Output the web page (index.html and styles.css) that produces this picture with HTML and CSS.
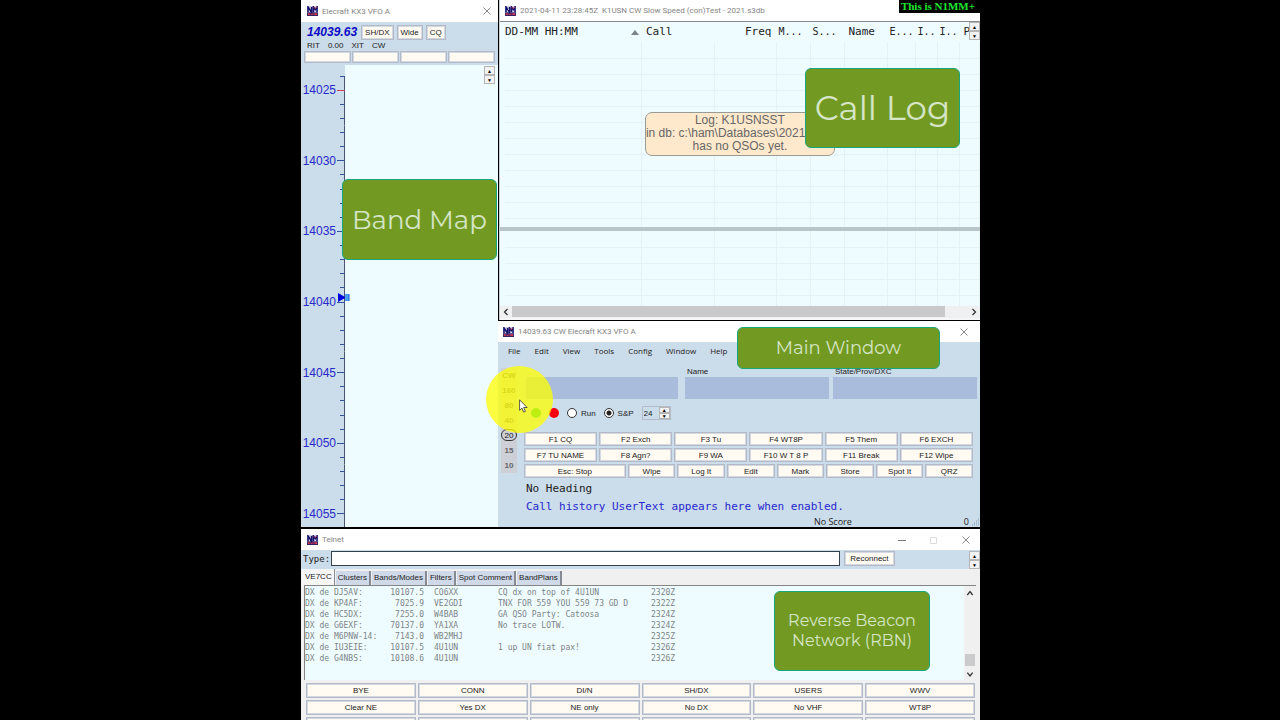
FILE: index.html
```html
<!DOCTYPE html>
<html lang="en">
<head>
<meta charset="utf-8">
<title>N1MM+ windows</title>
<link rel="stylesheet" href="styles.css">
</head>
<body>
<svg class="defs" aria-hidden="true">
  <symbol id="logo" viewBox="0 0 12 11">
    <rect width="12" height="11" fill="#d3cfe8"/>
    <rect y="7" width="12" height="4" fill="#33205f"/>
    <path d="M1 9h2M4 9h3M8 9h3" stroke="#d33a55" stroke-width="2"/>
    <path d="M1 7V1l4 6V1M7 7V1l2 3 2-3v6" fill="none" stroke="#11116b" stroke-width="1.7"/>
    <path d="M7 1l2 2 2-2" fill="none" stroke="#c03048" stroke-width="1"/>
  </symbol>
  <symbol id="close" viewBox="0 0 8 8"><path d="M.5 .5l7 7M7.500 .5l-7 7" stroke="#8a8a8a" fill="none"/></symbol>
</svg>
<main class="desktop">
  <div class="upper">
    <section class="window bandmap">
      <header class="title"><svg class="logo"><use href="#logo"/></svg><span>Elecraft KX3 VFO A</span><button class="close" aria-label="Close"><svg><use href="#close"/></svg></button></header>
      <div class="vfo"><strong>14039.63</strong><button>SH/DX</button><button>Wide</button><button>CQ</button></div>
      <div class="rit"><span>RIT</span><span>0.00</span><span>XIT</span><span>CW</span></div>
      <div class="slots"><button aria-label="Slot 1"></button><button aria-label="Slot 2"></button><button aria-label="Slot 3"></button><button aria-label="Slot 4"></button></div>
      <div class="map">
        <ul class="scale">
          <li></li><li class="major spot">14025</li><li></li><li></li><li></li><li></li>
          <li class="major">14030</li><li></li><li></li><li></li><li></li>
          <li class="major">14035</li><li></li><li></li><li></li><li></li>
          <li class="major">14040</li><li></li><li></li><li></li><li></li>
          <li class="major">14045</li><li></li><li></li><li></li><li></li>
          <li class="major">14050</li><li></li><li></li><li></li><li></li>
          <li class="major">14055</li><li class="tail"></li>
        </ul>
        <div class="spots"><div class="spin"><button aria-label="Up">▲</button><button aria-label="Down">▼</button></div></div>
        <svg class="marker" viewBox="0 0 12 9"><path d="M0 0l8 4.500-8 4.500z" fill="#00d"/><path d="M7 1h4v7H7z" fill="#4aa0f0"/><path d="M11 1v7" stroke="#125ad0"/></svg>
      </div>
      <div class="label label-map">Band Map</div>
    </section>

    <div class="right">
      <section class="window log">
        <header class="title"><svg class="logo"><use href="#logo"/></svg><span>2021-04-11 23:28:45Z&nbsp; K1USN CW Slow Speed (con)Test - 2021.s3db</span></header>
        <div class="banner">This is N1MM+</div>
        <div class="pane pane-top">
          <table>
            <colgroup><col class="c-time"><col><col class="c-freq"><col class="c-m"><col class="c-s"><col class="c-name"><col class="c-e"><col class="c-i"><col class="c-j"><col class="c-p"></colgroup>
            <thead><tr><th>DD-MM HH:MM<i class="sort"></i></th><th>Call</th><th class="num">Freq</th><th class="slim">M...</th><th class="slim">S...</th><th>Name</th><th class="slim">E...</th><th class="slim">I..</th><th class="slim">I..</th><th>P</th></tr></thead>
            <tbody>
              <tr><td><td><td><td><td><td><td><td><td><td></tr>
              <tr><td><td><td><td><td><td><td><td><td><td></tr>
              <tr><td><td><td><td><td><td><td><td><td><td></tr>
              <tr><td><td><td><td><td><td><td><td><td><td></tr>
              <tr><td><td><td><td><td><td><td><td><td><td></tr>
              <tr><td><td><td><td><td><td><td><td><td><td></tr>
              <tr><td><td><td><td><td><td><td><td><td><td></tr>
              <tr><td><td><td><td><td><td><td><td><td><td></tr>
              <tr><td><td><td><td><td><td><td><td><td><td></tr>
              <tr><td><td><td><td><td><td><td><td><td><td></tr>
              <tr><td><td><td><td><td><td><td><td><td><td></tr>
              <tr><td><td><td><td><td><td><td><td><td><td></tr>
            </tbody>
          </table>
          <div class="spin"><button aria-label="Up">▲</button><button aria-label="Down">▼</button></div>
          <div class="notice">Log: K1USNSST<br>in db: c:\ham\Databases\2021.s3db<br>has no QSOs yet.</div>
        </div>
        <div class="pane pane-low">
          <table>
            <colgroup><col class="c-time"><col><col class="c-freq"><col class="c-m"><col class="c-s"><col class="c-name"><col class="c-e"><col class="c-i"><col class="c-j"><col class="c-p"></colgroup>
            <tbody>
              <tr><td><td><td><td><td><td><td><td><td><td></tr>
              <tr><td><td><td><td><td><td><td><td><td><td></tr>
              <tr><td><td><td><td><td><td><td><td><td><td></tr>
              <tr><td><td><td><td><td><td><td><td><td><td></tr>
              <tr><td><td><td><td><td><td><td><td><td><td></tr>
            </tbody>
          </table>
        </div>
        <div class="hbar"><button aria-label="Scroll left"><svg viewBox="0 0 6 8"><path d="M4.500 1l-3 3 3 3"/></svg></button><div class="track"><div class="thumb"></div></div><button aria-label="Scroll right"><svg viewBox="0 0 6 8"><path d="M1.500 1l3 3-3 3"/></svg></button></div>
        <div class="label label-log">Call Log</div>
      </section>

      <section class="window entry">
        <header class="title"><svg class="logo"><use href="#logo"/></svg><span>14039.63 CW Elecraft KX3 VFO A</span><button class="close" aria-label="Close"><svg><use href="#close"/></svg></button></header>
        <nav class="menu"><button>File</button><button>Edit</button><button>View</button><button>Tools</button><button>Config</button><button>Window</button><button>Help</button></nav>
        <div class="body">
          <div class="bands"><button>CW</button><button>160</button><button>80</button><button>40</button><button class="on">20</button><button>15</button><button>10</button></div>
          <div class="form">
            <div class="fields">
              <label class="f-call"><span>&nbsp;</span><input type="text" aria-label="Call"></label>
              <label><span>Name</span><input type="text"></label>
              <label><span>State/Prov/DXC</span><input type="text"></label>
            </div>
            <div class="mode">
              <i class="led green"></i><i class="led red"></i>
              <label><input type="radio" name="mode">Run</label>
              <label><input type="radio" name="mode" checked>S&amp;P</label>
              <div class="speed"><input type="text" value="24" aria-label="Speed"><div class="spin"><button aria-label="Faster">▲</button><button aria-label="Slower">▼</button></div></div>
            </div>
            <div class="keys">
              <button>F1 CQ</button><button>F2 Exch</button><button>F3 Tu</button><button>F4 WT8P</button><button>F5 Them</button><button>F6 EXCH</button>
              <button>F7 TU NAME</button><button>F8 Agn?</button><button>F9 WA</button><button>F10 W T 8 P</button><button>F11 Break</button><button>F12 Wipe</button>
            </div>
            <div class="actions"><button>Esc: Stop</button><button>Wipe</button><button>Log It</button><button>Edit</button><button>Mark</button><button>Store</button><button>Spot It</button><button>QRZ</button></div>
            <p class="heading">No Heading</p>
            <p class="history">Call history UserText appears here when enabled.</p>
          </div>
        </div>
        <footer class="status"><span>No Score</span><span>0</span><svg class="grip" viewBox="0 0 8 8"><path d="M6 1h1M4 3h1M6 3h1M2 5h1M4 5h1M6 5h1M0 7h1M2 7h1M4 7h1M6 7h1" stroke="#8497ab"/></svg></footer>
        <div class="halo"></div>
        <svg class="pointer" viewBox="0 0 9 14"><path d="M.6 .8v10.500l2.400-2.200 1.700 4 1.700-.8-1.700-3.800h3.400z" fill="#fff" stroke="#333" stroke-width=".8"/></svg>
        <div class="label label-main">Main Window</div>
      </section>
    </div>
  </div>

  <section class="window telnet">
    <header class="title"><svg class="logo"><use href="#logo"/></svg><span>Telnet</span>
      <div class="controls"><button aria-label="Minimize"><svg viewBox="0 0 8 8"><path d="M0 4.500h8" stroke="#777"/></svg></button><button aria-label="Maximize"><svg viewBox="0 0 8 8"><path d="M.5 1.500h6v6h-6z" stroke="#ddd" fill="none"/></svg></button><button aria-label="Close"><svg><use href="#close"/></svg></button></div>
    </header>
    <div class="type"><label for="cmd">Type:</label><input id="cmd" type="text"><button class="re">Reconnect</button><div class="spin"><button aria-label="Up">▲</button><button aria-label="Down">▼</button></div></div>
    <div class="tabs"><button class="active">VE7CC</button><button>Clusters</button><button>Bands/Modes</button><button>Filters</button><button>Spot Comment</button><button>BandPlans</button></div>
    <div class="feed">
      <table>
        <colgroup><col class="t-de"><col class="t-freq"><col class="t-dx"><col class="t-note"><col></colgroup>
        <tr><td>DX de DJ5AV:</td><td>10107.5</td><td>CO6XX</td><td>CQ dx on top of 4U1UN</td><td>2320Z</td></tr>
        <tr><td>DX de KP4AF:</td><td>7025.9</td><td>VE2GDI</td><td>TNX FOR 559 YOU 559 73 GD D</td><td>2322Z</td></tr>
        <tr><td>DX de HC5DX:</td><td>7255.0</td><td>W4BAB</td><td>GA QSO Party: Catoosa</td><td>2324Z</td></tr>
        <tr><td>DX de G6EXF:</td><td>70137.0</td><td>YA1XA</td><td>No trace LOTW.</td><td>2324Z</td></tr>
        <tr><td>DX de M6PNW-14:</td><td>7143.0</td><td>WB2MHJ</td><td></td><td>2325Z</td></tr>
        <tr><td>DX de IU3EIE:</td><td>10107.5</td><td>4U1UN</td><td>1 up UN fiat pax!</td><td>2326Z</td></tr>
        <tr><td>DX de G4NBS:</td><td>10108.6</td><td>4U1UN</td><td></td><td>2326Z</td></tr>
      </table>
      <div class="vbar"><svg viewBox="0 0 6 6"><path d="M1 4.500l2-2.500 2 2.500"/></svg><div class="thumb"></div><svg viewBox="0 0 6 6"><path d="M1 2l2 2.500 2-2.500"/></svg></div>
      <div class="label label-rbn">Reverse Beacon Network (RBN)</div>
    </div>
    <div class="commands">
      <button>BYE</button><button>CONN</button><button>DI/N</button><button>SH/DX</button><button>USERS</button><button>WWV</button>
      <button>Clear NE</button><button>Yes DX</button><button>NE only</button><button>No DX</button><button>No VHF</button><button>WT8P</button>
      <button aria-label="Macro 13"></button><button aria-label="Macro 14"></button><button aria-label="Macro 15"></button><button aria-label="Macro 16"></button><button aria-label="Macro 17"></button><button aria-label="Macro 18"></button>
    </div>
  </section>
</main>
</body>
</html>
```
FILE: styles.css
```css
* { box-sizing: border-box; }
body { margin: 0; background: #000; font: 8px "Liberation Sans", Arial, sans-serif; color: #222; }
button, input { font: inherit; color: inherit; margin: 0; padding: 0; border: 0; background: none; border-radius: 0; outline: 0; }
button { white-space: nowrap; }
.defs { position: absolute; width: 0; height: 0; }

.desktop { display: flex; flex-direction: column; gap: 2px; width: 53.125%; min-width: 680px; height: 100vh; margin: 0 auto; padding-left: 1px; overflow: hidden; }
.upper { flex: 1; min-height: 0; display: flex; }
.right { flex: 1; min-width: 0; display: flex; flex-direction: column; gap: 1px; }
.window { position: relative; background: #cbdcea; }

.title { display: flex; align-items: center; gap: 4px; height: 21px; padding: 0 7px 0 6px; background: #fff; color: #858585; font: 8px Roboto, "Open Sans", sans-serif; white-space: nowrap; }
.logo { width: 11px; height: 10px; flex: none; }
.close { margin-left: auto; }
.title button { width: 8px; height: 8px; line-height: 0; }
.title button svg { width: 8px; height: 8px; }
.controls { margin-left: auto; display: flex; gap: 24px; padding-right: 3px; }

.vfo button, .slots button, .keys button, .actions button, .commands button, .re { background: #fffaf2; border: 1px solid #b4b9c6; outline: 1px solid #d3d8e2; outline-offset: -2px; }

.spin { display: flex; flex-direction: column; width: 11px; }
.spin button { height: 9px; background: #f2f2f2; border: 1px solid #b5b5b5; font-size: 5px; line-height: 6px; color: #000; text-align: center; }

.label { position: absolute; z-index: 3; display: flex; align-items: center; justify-content: center; text-align: center; background: #729a22; border: 1px solid #1ba57d; border-radius: 6px; color: #d5e5c6; font-family: Montserrat, Inter, sans-serif; font-weight: 400; white-space: nowrap; }
.label-map { right: 1px; top: 179px; width: 155px; height: 81px; font-size: 26px; }
.label-log { right: 20px; top: 68px; width: 155px; height: 80px; font-size: 34px; }
.label-main { right: 40px; top: 6px; width: 203px; height: 42px; font-size: 18px; }
.label-rbn { right: 46px; top: 5px; width: 156px; height: 80px; padding: 0 8px; font-size: 16px; line-height: 20px; white-space: normal; }

/* Band map */
.bandmap { flex: 0 0 29%; display: flex; flex-direction: column; margin-right: 1px; }
.bandmap .title { height: 22px; }
.vfo { display: flex; align-items: center; height: 19px; padding: 1px 6px 0; gap: 3px; }
.vfo strong { margin-right: 1px; font-size: 12px; font-style: italic; color: #0b0bc4; }
.vfo button { height: 15px; padding: 0 3px; }
.rit { display: flex; gap: 8px; padding: 0 6px; height: 10px; line-height: 10px; }
.slots { display: grid; grid-template-columns: repeat(4, 1fr); gap: 1px; padding: 0 3px; height: 14px; }
.slots button { height: 12px; }
.map { position: relative; flex: 1; min-height: 0; display: flex; }
.scale { list-style: none; margin: 0; padding: 4px 0 0; width: 44px; display: flex; flex-direction: column; color: #2929c8; font-size: 12px; }
.scale li { flex: 1; min-height: 0; display: flex; align-items: center; justify-content: flex-end; gap: 1px; line-height: 12px; background: linear-gradient(#4a5575, #4a5575) right / 1px 100% no-repeat; }
.scale li::after { content: ""; width: 5px; height: 1px; background: #31549c; }
.scale li.major::after { width: 8px; }
.scale li.spot::after { background: #d0405c; }
.scale li:first-child { background-size: 1px 50%; background-position: right bottom; }
.scale li.tail { flex: 0 0 6px; }
.scale li.tail::after { display: none; }
.spots { flex: 1; display: flex; justify-content: flex-end; align-items: flex-start; padding: 1px 3px; background: #effcff; }
.marker { position: absolute; left: 37px; top: 51%; width: 12px; height: 9px; margin-top: -8px; }

/* Call log */
.log { flex: 1; min-height: 0; display: flex; flex-direction: column; background: #effcff; border-left: 1px solid #c9cdd4; }
.log .title { padding-left: 5px; height: 21px; }
.banner { position: absolute; right: 0; top: 0; padding: 0 5px 0 2px; background: #000; color: #1fe62f; font: bold 11px/13px "Liberation Serif", serif; }
.pane { position: relative; overflow: hidden; padding-left: 5px; }
.pane-top { flex: 1; min-height: 0; border-top: 1px solid #868b8e; }
.pane-low { flex: 0 0 79px; border-top: 4px solid #b9c5cb; }
.pane table { width: 100%; table-layout: fixed; border-collapse: collapse; font: 11px "DejaVu Sans Mono", monospace; }
.pane th { position: relative; height: 20px; padding: 0 0 2px 4px; text-align: left; font-weight: 400; white-space: nowrap; overflow: hidden; }
.pane th.slim { padding-left: 2px; font-size: 10px; }
.pane th:first-child { padding-left: 0; }
.pane th.num { text-align: right; padding-right: 5px; }
.pane td { height: 16px; padding: 0; border-right: 1px solid #e5f2f5; border-bottom: 1px solid #e5f2f5; }
.c-time { width: 137px; } .c-freq { width: 62px; } .c-m { width: 34px; } .c-s { width: 34px; } .c-name { width: 43px; } .c-e { width: 28px; } .c-i { width: 22px; } .c-j { width: 22px; } .c-p { width: 20px; }
.sort { position: absolute; right: 3px; top: 8px; border: 4px solid transparent; border-top: 0; border-bottom: 5px solid #7b8288; }
.pane .spin { position: absolute; right: 0; top: 0; }
.notice { position: absolute; left: 145px; top: 90px; width: 190px; height: 44px; padding-top: 1px; background: #ffe9cc; border: 1px solid #9a9a96; border-radius: 7px; color: #666; font-size: 12px; line-height: 13px; text-align: center; white-space: nowrap; overflow: hidden; }
.hbar { display: flex; height: 14px; background: #eef0f1; border-bottom: 2px solid #f6f6f6; }
.hbar button { width: 12px; line-height: 0; }
.hbar svg { width: 6px; height: 8px; fill: none; stroke: #333; stroke-width: 1.3; }
.track { flex: 1; }
.hbar .thumb { width: 95%; height: 11px; background: #c9c8ca; }

/* Entry window */
.entry { flex: none; z-index: 2; margin-left: -1px; }
.entry .title { padding-right: 12px; padding-left: 5px; }
.menu { display: flex; gap: 14px; padding: 0 10px 2px; height: 18px; font: 8px "Open Sans", sans-serif; }
.body { display: flex; }
.bands { flex: none; display: flex; flex-direction: column; width: 16px; margin: 8px 7px 0 3px; background: #cdd0d6; font-weight: bold; color: #666; height: 105px; }
.bands button { height: 15px; }
.bands .on { border: 1px solid #333; border-radius: 6px; height: 12px; margin: 1px 0 2px; font-weight: 400; color: #111; }
.form { flex: 1; min-width: 0; padding-right: 3px; }
.fields { display: grid; grid-template-columns: 155px 1fr 1fr; column-gap: 4px; padding-left: 2px; }
.f-call { margin-right: 3px; }
.fields label { min-width: 0; }
.fields span { display: block; height: 17px; padding: 7px 2px 0; line-height: 9px; }
.fields input { display: block; width: 100%; height: 22px; background: #a9bcdc; }
.mode { display: flex; align-items: center; gap: 8px; height: 28px; padding-left: 7px; }
.mode label { display: flex; align-items: center; gap: 4px; }
.mode input[type=radio] { appearance: none; width: 10px; height: 10px; border: 1px solid #333; border-radius: 50%; background: #fff; }
.mode input[type=radio]:checked { background: radial-gradient(#222 0 2px, #fff 3px); }
.led { width: 10px; height: 10px; border-radius: 50%; }
.green { background: #00c040; }
.red { background: #f70010; }
.speed { display: flex; align-items: center; width: 29px; height: 14px; border: 1px solid #b4bcca; }
.speed input { flex: 1; min-width: 0; padding-left: 1px; }
.speed .spin button { height: 6px; line-height: 3px; }
.keys { display: grid; grid-template-columns: repeat(6, 1fr); gap: 2px; margin: 5px 4px 2px 0; }
.keys button, .actions button { height: 14px; padding: 0 1px; min-width: 0; }
.actions { display: grid; grid-template-columns: 102px repeat(7, 1fr); gap: 2px; margin: 0 4px 2px 0; }
.form p { margin: 0; padding-left: 2px; font: 11px/18px "DejaVu Sans Mono", monospace; white-space: nowrap; }
.history { color: #2727cf; }
.status { display: grid; grid-template-columns: 1fr auto 8px; align-items: center; height: 11px; gap: 3px; font: 9px/11px "Open Sans", sans-serif; padding-left: 316px; }
.grip { width: 8px; height: 8px; }
.halo { position: absolute; left: -12px; top: 45px; width: 67px; height: 67px; border-radius: 50%; background: rgba(255, 255, 0, .75); pointer-events: none; }
.pointer { position: absolute; left: 21px; top: 78px; width: 9px; height: 14px; }

/* Telnet */
.telnet { flex: none; height: 191px; overflow: hidden; background: #f0f0f0; }
.telnet .title { height: 21px; }
.type { display: flex; align-items: flex-start; gap: 4px; height: 19px; padding-top: 1px; background: #cbdcea; }
.type label { margin: 0 -3px 0 2px; font: 9px/17px "DejaVu Sans Mono", monospace; }
.type input { flex: 0 0 75%; height: 15px; background: #fff; border: 1px solid #35424e; }
.re { height: 15px; padding: 0 5px; }
.type .spin { margin: 0 0 0 auto; }
.tabs { display: flex; align-items: flex-end; height: 16px; gap: 1px; padding-left: 1px; }
.tabs button { height: 14px; padding: 0 2px 1px; background: #cfd9e8; border-right: 2px solid #858a93; }
.tabs .active { height: 16px; padding: 0 2px 1px 3px; background: #f6f6f6; border-right-width: 1px; }
.feed { position: relative; display: flex; justify-content: space-between; height: 95px; margin: 0 4px 0 3px; border-left: 1px solid #858585; border-top: 1px solid #858585; background: #effcff; }
.feed table { align-self: flex-start; width: 380px; margin-top: 2px; table-layout: fixed; border-collapse: collapse; font: 8px "DejaVu Sans Mono", monospace; color: #7c8486; white-space: pre; }
.feed td { padding: 0; height: 10px; line-height: 10px; }
.feed tr { height: 10px; border-bottom: 1px solid transparent; }
.feed td:nth-child(2) { text-align: right; padding-right: 10px; }
.t-de { width: 79px; } .t-freq { width: 50px; } .t-dx { width: 64px; } .t-note { width: 153px; }
.vbar { display: flex; flex-direction: column; align-items: center; width: 12px; background: #f0f0f0; padding: 3px 0 2px; }
.vbar svg { width: 8px; height: 8px; fill: none; stroke: #333; }
.vbar .thumb { width: 10px; height: 12px; margin: auto 0 4px; background: #cbcbcd; }
.commands { display: grid; grid-template-columns: repeat(6, 1fr); gap: 2px; margin: 3px 5px 0; }
.commands button { height: 15px; }
```
